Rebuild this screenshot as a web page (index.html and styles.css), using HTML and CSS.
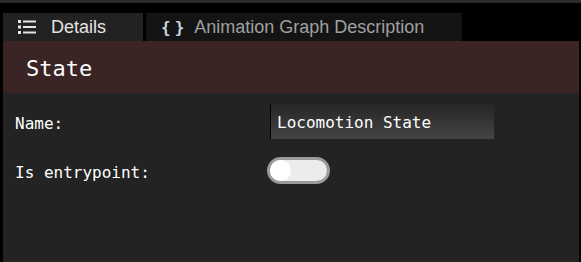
FILE: index.html
```html
<!DOCTYPE html>
<html lang="en">
<head>
    <meta charset="UTF-8">
    <title>State Details</title>
    <link rel="stylesheet" href="styles.css">
</head>
<body>
    <div class="topbar"></div>
    <div class="frame">
        <div class="tabs">
            <div class="tab active">
                <svg class="tab-icon" width="18" height="14" viewBox="0 0 18 14">
                    <rect x="0" y="0" width="3" height="3" fill="#e6e6e6"/>
                    <rect x="5" y="0.5" width="13" height="2" fill="#e6e6e6"/>
                    <rect x="0" y="5.5" width="3" height="3" fill="#e6e6e6"/>
                    <rect x="5" y="6" width="13" height="2" fill="#e6e6e6"/>
                    <rect x="0" y="11" width="3" height="3" fill="#e6e6e6"/>
                    <rect x="5" y="11.5" width="13" height="2" fill="#e6e6e6"/>
                </svg>
                <span>Details</span>
            </div>
            <div class="tab">
                <span class="braces">{}</span>
                <span>Animation Graph Description</span>
            </div>
        </div>

        <div class="header">State</div>

        <div class="content">
            <div class="row">
                <label class="field-label">Name:</label>
                <div class="text-input">Locomotion State</div>
            </div>
            <div class="row">
                <label class="field-label">Is entrypoint:</label>
                <div class="toggle"><div class="knob"></div></div>
            </div>
        </div>
    </div>
</body>
</html>
```

FILE: styles.css
```css
html, body {
    margin: 0;
    height: 100%;
    background-color: #000;
}
body {
    display: flex;
    flex-direction: column;
}
.topbar {
    height: 3px;
    background-color: #2b2b2b;
}
.frame {
    flex: 1;
    display: flex;
    flex-direction: column;
    margin-left: 3px;
    margin-right: 2px;
}
.tabs {
    display: flex;
    gap: 3px;
    margin-top: 10px;
    height: 28px;
}
.tab {
    display: flex;
    align-items: center;
    gap: 6px;
    padding-left: 15px;
    width: 301px;
    background-color: #141414;
    color: #a0a0a0;
    font-family: "Liberation Sans", Arial, sans-serif;
    font-size: 18px;
}
.tab.active {
    width: 125px;
    background-color: #222;
    color: #e2e2e2;
    gap: 15px;
}
.braces {
    font-family: "DejaVu Sans Mono", monospace;
    font-weight: bold;
    font-size: 16px;
    color: #c8d4e0;
    letter-spacing: 4px;
}
.header {
    height: 52px;
    display: flex;
    align-items: center;
    padding-left: 23px;
    padding-top: 2px;
    box-sizing: border-box;
    background-color: #3a2424;
    color: #fff;
    font-family: "DejaVu Sans Mono", monospace;
    font-size: 22px;
}
.content {
    flex: 1;
    background-color: #232323;
    padding-top: 11px;
}
.row {
    display: flex;
    align-items: center;
    padding-left: 12px;
    margin-bottom: 18px;
}
.field-label {
    width: 252px;
    padding-top: 3px;
    color: #fff;
    font-family: "DejaVu Sans Mono", monospace;
    font-size: 16px;
}
.text-input {
    box-sizing: border-box;
    width: 224px;
    height: 35px;
    margin-left: 3px;
    padding-left: 6px;
    padding-top: 1px;
    display: flex;
    align-items: center;
    border-left: 1px solid #000;
    background: linear-gradient(#262626, #444);
    color: #fff;
    font-family: "DejaVu Sans Mono", monospace;
    font-size: 16px;
}
.toggle {
    box-sizing: border-box;
    width: 63px;
    height: 27px;
    border: 3px solid #9a9a9a;
    border-radius: 14px;
    background-color: #ececec;
}
.knob {
    width: 21px;
    height: 21px;
    border-radius: 50%;
    background-color: #fff;
}
```
